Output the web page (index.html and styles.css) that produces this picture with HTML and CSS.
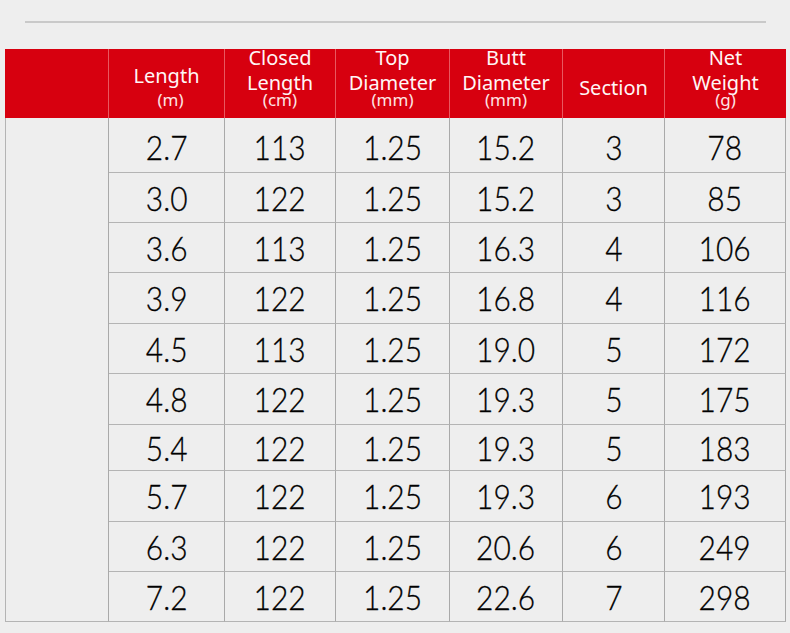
FILE: index.html
```html
<!DOCTYPE html>
<html>
<head>
<meta charset="utf-8">
<link rel="stylesheet" href="styles.css">
</head>
<body>
<div class="page">
  <div class="rule"></div>
  <div class="sheet">
    <div class="hcell"></div>
    <div class="hcell h-two"><span class="h-main">Length</span><span class="h-unit">(m)</span></div>
    <div class="hcell"><span class="h-main">Closed</span><span class="h-main">Length</span><span class="h-unit">(cm)</span></div>
    <div class="hcell"><span class="h-main">Top</span><span class="h-main">Diameter</span><span class="h-unit">(mm)</span></div>
    <div class="hcell"><span class="h-main">Butt</span><span class="h-main">Diameter</span><span class="h-unit">(mm)</span></div>
    <div class="hcell h-single"><span class="h-main">Section</span></div>
    <div class="hcell h-last"><span class="h-main">Net</span><span class="h-main">Weight</span><span class="h-unit">(g)</span></div>

    <div class="side"></div>

    <div class="cell"><span class="num">2.7</span></div><div class="cell"><span class="num">113</span></div><div class="cell"><span class="num">1.25</span></div><div class="cell"><span class="num">15.2</span></div><div class="cell"><span class="num">3</span></div><div class="cell"><span class="num">78</span></div>
    <div class="cell"><span class="num">3.0</span></div><div class="cell"><span class="num">122</span></div><div class="cell"><span class="num">1.25</span></div><div class="cell"><span class="num">15.2</span></div><div class="cell"><span class="num">3</span></div><div class="cell"><span class="num">85</span></div>
    <div class="cell"><span class="num">3.6</span></div><div class="cell"><span class="num">113</span></div><div class="cell"><span class="num">1.25</span></div><div class="cell"><span class="num">16.3</span></div><div class="cell"><span class="num">4</span></div><div class="cell"><span class="num">106</span></div>
    <div class="cell"><span class="num">3.9</span></div><div class="cell"><span class="num">122</span></div><div class="cell"><span class="num">1.25</span></div><div class="cell"><span class="num">16.8</span></div><div class="cell"><span class="num">4</span></div><div class="cell"><span class="num">116</span></div>
    <div class="cell"><span class="num">4.5</span></div><div class="cell"><span class="num">113</span></div><div class="cell"><span class="num">1.25</span></div><div class="cell"><span class="num">19.0</span></div><div class="cell"><span class="num">5</span></div><div class="cell"><span class="num">172</span></div>
    <div class="cell"><span class="num">4.8</span></div><div class="cell"><span class="num">122</span></div><div class="cell"><span class="num">1.25</span></div><div class="cell"><span class="num">19.3</span></div><div class="cell"><span class="num">5</span></div><div class="cell"><span class="num">175</span></div>
    <div class="cell"><span class="num">5.4</span></div><div class="cell"><span class="num">122</span></div><div class="cell"><span class="num">1.25</span></div><div class="cell"><span class="num">19.3</span></div><div class="cell"><span class="num">5</span></div><div class="cell"><span class="num">183</span></div>
    <div class="cell"><span class="num">5.7</span></div><div class="cell"><span class="num">122</span></div><div class="cell"><span class="num">1.25</span></div><div class="cell"><span class="num">19.3</span></div><div class="cell"><span class="num">6</span></div><div class="cell"><span class="num">193</span></div>
    <div class="cell"><span class="num">6.3</span></div><div class="cell"><span class="num">122</span></div><div class="cell"><span class="num">1.25</span></div><div class="cell"><span class="num">20.6</span></div><div class="cell"><span class="num">6</span></div><div class="cell"><span class="num">249</span></div>
    <div class="cell"><span class="num">7.2</span></div><div class="cell"><span class="num">122</span></div><div class="cell"><span class="num">1.25</span></div><div class="cell"><span class="num">22.6</span></div><div class="cell"><span class="num">7</span></div><div class="cell"><span class="num">298</span></div>
  </div>
</div>
</body>
</html>
```

FILE: styles.css
```css
* { box-sizing: border-box; }

html, body {
  margin: 0;
  padding: 0;
  background: #eeeeee;
}

body {
  width: 790px;
  height: 633px;
  overflow: hidden;
  font-family: "Noto Sans", "Open Sans", sans-serif;
}

.page {
  padding-top: 21px;
}

.rule {
  margin-left: 25px;
  width: 741px;
  height: 2px;
  background: #c9c9c9;
}

.sheet {
  margin-top: 26px;
  margin-left: 5px;
  width: 781px;
  display: grid;
  grid-template-columns: 104px 116px 111px 114px 113px 102px 121px;
  grid-template-rows: 69px 55px 50px 50px 51px 50px 51px 46px 51px 50px 50px;
}

.hcell {
  background: #d7000f;
  color: #fff6f6;
  border-right: 1px solid #e8585f;
  display: flex;
  flex-direction: column;
  align-items: center;
  justify-content: flex-end;
  padding-bottom: 11px;
}

.h-last { border-right: none; }

.h-main {
  font-size: 20px;
  line-height: 25px;
  white-space: nowrap;
}

.h-unit {
  font-size: 17px;
  line-height: 14px;
  margin-top: -2px;
  color: #fde4e4;
}

.h-two .h-unit {
  margin-top: 5px;
  padding-left: 8px;
}

.h-single {
  padding-bottom: 18px;
}

.side {
  grid-column: 1;
  grid-row: 2 / span 10;
  border-left: 1px solid #b4b4b4;
  border-right: 1px solid #a9a9a9;
  border-bottom: 1px solid #b4b4b4;
}

.cell {
  border-right: 1px solid #a9a9a9;
  border-bottom: 1px solid #b4b4b4;
  display: flex;
  align-items: center;
  justify-content: center;
}

.cell:nth-child(-n+14) {
  padding-top: 3px;
}

.num {
  display: inline-block;
  font-family: "Lato", "Noto Sans", sans-serif;
  font-weight: 300;
  font-size: 34px;
  line-height: 1;
  color: #000000;
  -webkit-text-stroke: 0.3px #000000;
  transform: scaleX(0.88);
}
```
